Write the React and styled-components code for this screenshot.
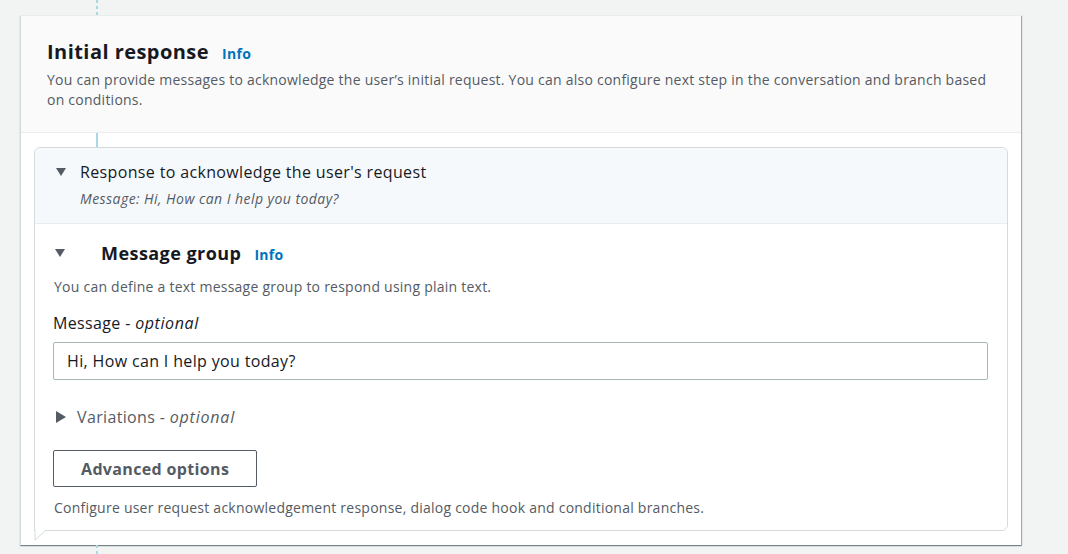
import React from 'react'
import styled, { createGlobalStyle } from 'styled-components'

const GlobalStyle = createGlobalStyle`
  * { box-sizing: border-box; }
  body {
    margin: 0;
    background: #f2f3f3;
    font-family: "Open Sans", "Noto Sans", sans-serif;
    color: #16191f;
  }
`

const Page = styled.div`
  width: 1068px;
  height: 554px;
  overflow: hidden;
  padding-left: 20px;
`

const Connector = styled.div`
  width: 2px;
  height: ${(p) => p.h}px;
  margin-left: ${(p) => p.left}px;
  background: ${(p) =>
    p.dotted
      ? 'repeating-linear-gradient(to bottom, #a9d9e2 0 3px, transparent 3px 6px)'
      : '#a9d9e2'};
`

const Card = styled.section`
  width: 1001px;
  background: #fff;
  border-top: 1px solid #eaeded;
  border-left: 1px solid #d5dbdb;
  box-shadow: 1px 1px 1px 0 rgba(0, 28, 36, 0.3), 0 1px 1px 0 rgba(0, 28, 36, 0.3);
`

const CardHeader = styled.header`
  background: #fafafa;
  border-bottom: 1px solid #eaeded;
  padding: 22px 30px 22px 26px;
`

const TitleRow = styled.div`
  display: flex;
  align-items: baseline;
  gap: 13px;
`

const Title = styled.h2`
  margin: 0;
  font-size: ${(p) => p.size || 20}px;
  line-height: 28px;
  font-weight: 700;
  letter-spacing: 0.45px;
  color: #16191f;
`

const InfoLink = styled.span`
  font-size: 14px;
  font-weight: 700;
  letter-spacing: 0.3px;
  color: #0073bb;
`

const Desc = styled.p`
  margin: ${(p) => p.m || '0'};
  font-size: 14px;
  line-height: 20px;
  letter-spacing: 0.24px;
  color: #545b64;
`

const CardBody = styled.div`
  padding: 0 13px 14px 13px;
`

const Bubble = styled.div`
  position: relative;
  border: 1px solid #d5dbdb;
  border-radius: 6px 6px 6px 0;
  background: #fff;
`

const Tail = styled.svg`
  position: absolute;
  left: -1px;
  top: 100%;
  margin-top: -1px;
`

const BubbleTop = styled.div`
  background: #f6f9fc;
  border-bottom: 1px solid #eaeded;
  border-radius: 6px 6px 0 0;
  padding: 12px 20px 13px 21px;
`

const ExpandRow = styled.div`
  display: flex;
  align-items: center;
  gap: ${(p) => p.gap || 14}px;
`

const Caret = styled.span`
  display: inline-block;
  width: 0;
  height: 0;
  flex: none;
  ${(p) =>
    p.open
      ? `border-left: 5.5px solid transparent;
         border-right: 5.5px solid transparent;
         border-top: 8px solid #545b64;`
      : `border-top: 6px solid transparent;
         border-bottom: 6px solid transparent;
         border-left: 10px solid #545b64;`}
`

const ExpandTitle = styled.span`
  font-size: 16px;
  line-height: 24px;
  letter-spacing: 0.35px;
  color: ${(p) => p.color || '#16191f'};
  em { font-style: italic; letter-spacing: 0.8px; }
`

const Subtitle = styled.div`
  margin: 4px 0 0 24px;
  font-size: 14px;
  line-height: 22px;
  font-style: italic;
  letter-spacing: 0.45px;
  color: #545b64;
`

const BubbleBody = styled.div`
  padding: 15px 19px 12px 18px;
`

const GroupHead = styled.div`
  display: flex;
  align-items: center;
`

const CaretBox = styled.div`
  width: 48px;
  padding-left: 2px;
  display: flex;
  align-items: center;
`

const Label = styled.div`
  margin-top: 15px;
  font-size: 16px;
  line-height: 22px;
  letter-spacing: 0.35px;
  color: #16191f;
  em { font-style: italic; letter-spacing: 0.6px; }
`

const Input = styled.input`
  display: block;
  width: 100%;
  height: 38px;
  margin-top: 8px;
  padding: 0 13px;
  border: 1px solid #aab7b8;
  border-radius: 2px;
  font-family: inherit;
  font-size: 16px;
  letter-spacing: 0.35px;
  color: #16191f;
  background: #fff;
`

const Variations = styled.div`
  margin-top: 25px;
  padding-left: 3px;
`

const Button = styled.button`
  display: block;
  margin-top: 21px;
  height: 37px;
  padding: 0 27px;
  border: 1px solid #545b64;
  border-radius: 2px;
  background: #fff;
  font-family: inherit;
  font-size: 16px;
  font-weight: 700;
  letter-spacing: 0.35px;
  color: #545b64;
`

export default function App() {
  return (
    <Page>
      <GlobalStyle />
      <Connector left={76} h={15} dotted />
      <Card>
        <CardHeader>
          <TitleRow>
            <Title>Initial response</Title>
            <InfoLink>Info</InfoLink>
          </TitleRow>
          <Desc m="4px 0 0 0">
            You can provide messages to acknowledge the user’s initial request. You can also configure next step in the
            conversation and branch based on conditions.
          </Desc>
        </CardHeader>
        <Connector left={75} h={14} />
        <CardBody>
          <Bubble>
            <BubbleTop>
              <ExpandRow gap={14}>
                <Caret open />
                <ExpandTitle>Response to acknowledge the user's request</ExpandTitle>
              </ExpandRow>
              <Subtitle>Message: Hi, How can I help you today?</Subtitle>
            </BubbleTop>
            <BubbleBody>
              <GroupHead>
                <CaretBox>
                  <Caret open />
                </CaretBox>
                <TitleRow>
                  <Title size={18}>Message group</Title>
                  <InfoLink>Info</InfoLink>
                </TitleRow>
              </GroupHead>
              <Desc m="10px 0 0 1px">You can define a text message group to respond using plain text.</Desc>
              <Label>
                Message - <em>optional</em>
              </Label>
              <Input defaultValue="Hi, How can I help you today?" />
              <Variations>
                <ExpandRow gap={11}>
                  <Caret />
                  <ExpandTitle color="#545b64">
                    Variations - <em>optional</em>
                  </ExpandTitle>
                </ExpandRow>
              </Variations>
              <Button>Advanced options</Button>
              <Desc m="11px 0 0 1px">
                Configure user request acknowledgement response, dialog code hook and conditional branches.
              </Desc>
            </BubbleBody>
            <Tail width="14" height="12" viewBox="0 0 14 12">
              <path d="M1 0 L1 11 L12 1" fill="#fff" stroke="#d5dbdb" strokeWidth="1" />
            </Tail>
          </Bubble>
        </CardBody>
      </Card>
      <Connector left={76} h={20} dotted />
    </Page>
  )
}
